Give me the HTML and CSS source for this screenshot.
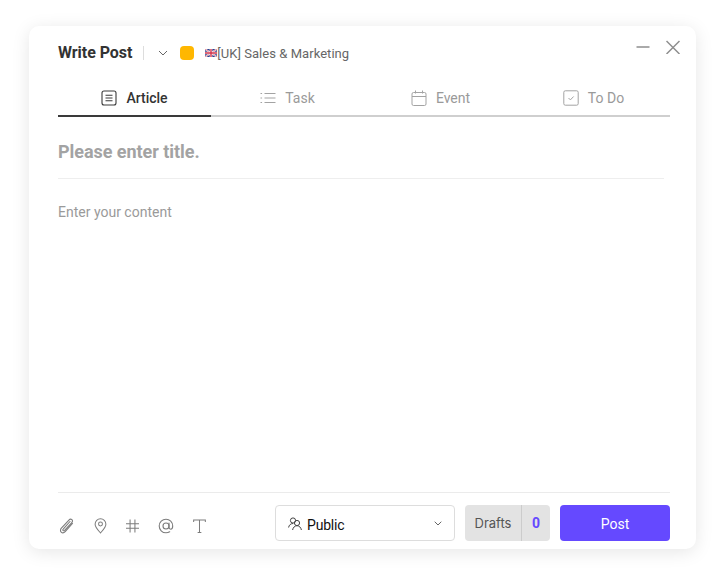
FILE: index.html
```html
<!DOCTYPE html>
<html lang="en">
<head>
<meta charset="utf-8">
<title>Write Post</title>
<link rel="stylesheet" href="styles.css">
</head>
<body>
<main class="stage">
  <section class="card">
    <header class="head">
      <h1 class="head-title">Write Post</h1>
      <span class="head-sep"></span>
      <svg class="head-chevron" width="10" height="6" viewBox="0 0 10 6"><path d="M1 1l4 4 4-4" fill="none" stroke="#666" stroke-width="1"/></svg>
      <span class="head-color"></span>
      <svg class="head-flag" width="12" height="8" viewBox="0 0 12 8">
        <rect width="12" height="8" rx="1" fill="#2b3f8c"/>
        <path d="M0 0l12 8M12 0L0 8" stroke="#fff" stroke-width="1.6"/>
        <path d="M0 0l12 8M12 0L0 8" stroke="#d2334b" stroke-width=".6"/>
        <path d="M6 0v8M0 4h12" stroke="#fff" stroke-width="2.6"/>
        <path d="M6 0v8M0 4h12" stroke="#d2334b" stroke-width="1.4"/>
      </svg>
      <span class="head-group">[UK] Sales &amp; Marketing</span>
      <div class="head-actions">
        <svg width="14" height="14" viewBox="0 0 14 14"><path d="M.5 7h13" stroke="#8e8e8e" stroke-width="1.5"/></svg>
        <svg width="14" height="14" viewBox="0 0 14 14"><path d="M.5 1l13 13M13.5 1L.5 14" stroke="#8e8e8e" stroke-width="1.5"/></svg>
      </div>
    </header>

    <nav class="tabs">
      <a class="tab tab-active">
        <svg width="16" height="16" viewBox="0 0 16 16" fill="none" stroke="#3a3a3a" stroke-width="1.1"><rect x="1" y="1" width="14" height="14" rx="2"/><path d="M4.5 5.2h7M4.5 8h7M4.5 10.8h7"/></svg>
        <span>Article</span>
      </a>
      <a class="tab">
        <svg width="16" height="16" viewBox="0 0 16 16" fill="none" stroke="#a3a3a3" stroke-width="1"><path d="M4.5 3.500H15.500M4.500 8H15.500M4.500 12.500H15.500"/><path d="M.5 3.500h1.600M.5 8h1.600M.5 12.500h1.600"/></svg>
        <span>Task</span>
      </a>
      <a class="tab">
        <svg width="16" height="16" viewBox="0 0 16 16" fill="none" stroke="#a3a3a3" stroke-width="1"><rect x="1" y="2.500" width="14" height="13" rx="1.500"/><path d="M1 6.500h14M4.500 .5v3M11.500 .5v3"/></svg>
        <span>Event</span>
      </a>
      <a class="tab">
        <svg width="16" height="16" viewBox="0 0 16 16" fill="none" stroke="#a3a3a3" stroke-width="1"><rect x=".8" y=".8" width="14.400" height="14.400" rx="1.500"/><path d="M5.500 8l1.900 1.900 3.200-3.400"/></svg>
        <span>To Do</span>
      </a>
    </nav>

    <div class="title-row">Please enter title.</div>
    <div class="content">Enter your content</div>

    <footer class="foot">
      <div class="tools">
        <svg width="16" height="17" viewBox="0 0 16 17" fill="none" stroke="#7c7c7c" stroke-width="1.1" stroke-linecap="round"><path d="M13.500 5.500L6.200 13.600c-1.200 1.300-3 1.400-4 .5s-.9-2.700.2-3.900L9.900 2.100c.9-1 2.200-1.100 3-.4s.8 1.900-.1 2.900L5.600 12.300c-.5.5-1.100.6-1.500.3s-.4-1 .1-1.500L11 3.500"/></svg>
        <svg width="13" height="16" viewBox="0 0 14 17" fill="none" stroke="#7c7c7c" stroke-width="1.1"><path d="M7 16C4.200 12.800 1.200 9.800 1.200 6.600a5.800 5.800 0 0 1 11.600 0C12.800 9.800 9.800 12.800 7 16z"/><circle cx="7" cy="6.400" r="2.100"/></svg>
        <svg width="13" height="14" viewBox="0 0 15 16" fill="none" stroke="#7c7c7c" stroke-width="1.2"><path d="M4.700 .5v15M10.300 .5v15M0 5.300h15M0 10.700h15"/></svg>
        <svg width="16" height="16" viewBox="0 0 16 16" fill="none" stroke="#7c7c7c" stroke-width="1.1" stroke-linecap="round"><circle cx="8" cy="8" r="3"/><path d="M11 5v4.300c0 1.200.8 1.900 1.700 1.900s2-1 2-3.200C14.700 4.300 11.700 1.200 8 1.200S1.200 4.300 1.200 8 4.200 14.800 8 14.800c1.500 0 2.700-.4 3.700-1"/></svg>
        <svg width="13" height="14" viewBox="0 0 14 15" fill="none" stroke="#7c7c7c" stroke-width="1.1"><path d="M.7 3.300V1h12.600v2.300M7 1v13.500M5 14.500h4"/></svg>
      </div>
      <button class="scope" type="button">
        <svg class="scope-icon" width="15" height="14" viewBox="0 0 15 14" fill="none" stroke="#444" stroke-width="1"><circle cx="5" cy="3.500" r="2.600"/><path d="M.6 10.500c.4-2.500 2.200-4 4.400-4"/><circle cx="9" cy="6" r="2.600"/><path d="M4.600 13c.4-2.500 2.200-4.300 4.400-4.300s4 1.800 4.400 4.300"/></svg>
        <span class="scope-label">Public</span>
        <svg class="scope-chevron" width="8" height="5" viewBox="0 0 8 5"><path d="M.7.7L4 4l3.300-3.300" fill="none" stroke="#666" stroke-width="1"/></svg>
      </button>
      <div class="drafts">
        <span class="drafts-label">Drafts</span>
        <span class="drafts-count">0</span>
      </div>
      <button class="post" type="button">Post</button>
    </footer>
  </section>
</main>
</body>
</html>
```
FILE: styles.css
```css
* { box-sizing: border-box; }
html, body { margin: 0; padding: 0; background: #fff; }
body { font-family: Roboto, "Liberation Sans", sans-serif; width: 725px; height: 573px; overflow: hidden; }
.stage { padding: 26px 29px 24px; }
.card {
  width: 667px;
  height: 523px;
  background: #fff;
  border-radius: 10px;
  box-shadow: 0 3px 18px rgba(0, 0, 0, .1);
  padding: 0 26px 0 29px;
  display: flex;
  flex-direction: column;
}
.head { display: flex; align-items: center; height: 54px; position: relative; }
.head-title { margin: 0; font-size: 16px; line-height: 20px; font-weight: 700; color: #333; letter-spacing: -.05px; }
.head-sep { width: 1px; height: 14px; background: #ddd; margin-left: 11px; }
.head-chevron { margin-left: 14px; }
.head-color { width: 14px; height: 14px; border-radius: 4px; background: #ffb700; margin-left: 12px; }
.head-flag { margin-left: 11px; }
.head-group { font-size: 13px; letter-spacing: .05px; color: #666; }
.head-actions { position: absolute; right: -10px; top: 14px; display: flex; gap: 16px; }
.tabs { display: grid; grid-template-columns: repeat(4, 153px); grid-auto-rows: 37px; height: 37px; border-bottom: 2px solid #cfcfcf; }
.tab { display: flex; align-items: center; justify-content: center; gap: 9px; height: 37px; font-size: 14px; color: #9a9a9a; border-bottom: 2px solid transparent; }
.tab-active { color: #333; font-weight: 500; border-bottom-color: #3a3a3a; }
.title-row {
  width: 606px;
  height: 62px;
  line-height: 70px;
  font-size: 18px;
  font-weight: 700;
  letter-spacing: -.05px;
  color: #a3a3a3;
  border-bottom: 1px solid #eee;
}
.content { flex: 1; padding-top: 25px; font-size: 14px; line-height: 17px; color: #9a9a9a; }
.foot { height: 57px; border-top: 1px solid #ebebeb; display: flex; align-items: flex-start; padding-top: 12px; }
.tools { display: flex; align-items: center; gap: 19px; width: 217px; height: 36px; padding: 6px 0 0 1px; }
.scope {
  width: 180px;
  height: 36px;
  background: #fff;
  border: 1px solid #ddd;
  border-radius: 4px;
  display: flex;
  align-items: center;
  padding: 0 12px;
  font: inherit;
}
.scope-icon { margin-top: 1px; }
.scope-label { margin-left: 4px; padding-top: 3px; font-size: 14px; letter-spacing: -.2px; color: #111; }
.scope-chevron { margin-left: auto; }
.drafts { display: flex; margin-left: 10px; width: 85px; height: 36px; background: #e3e3e3; border-radius: 4px; line-height: 37px; }
.drafts-label { width: 57px; text-align: center; font-family: Inter, Roboto, sans-serif; font-size: 13px; color: #555; border-right: 1px solid #ccc; }
.drafts-count { flex: 1; text-align: center; font-size: 14px; font-weight: 700; color: #6549ff; }
.post {
  margin-left: 10px;
  width: 110px;
  height: 36px;
  border: 0;
  border-radius: 4px;
  background: #6549ff;
  color: #fff;
  font: inherit;
  font-size: 14px;
  font-weight: 400;
  padding-top: 2px;
}
```
